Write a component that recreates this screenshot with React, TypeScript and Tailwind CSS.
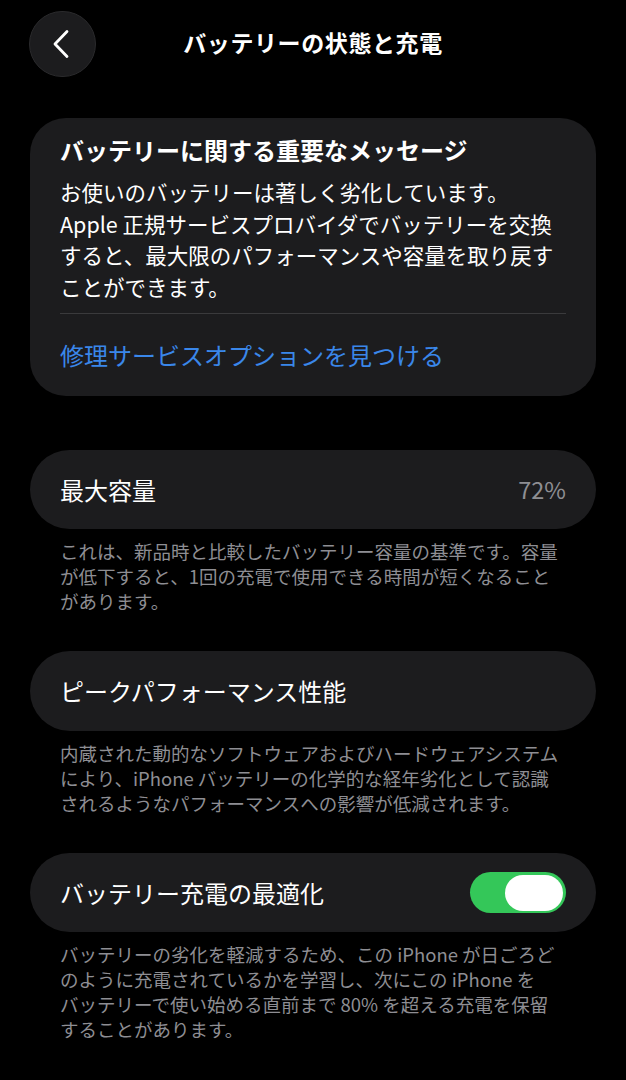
import React from "react";

const font = { fontFamily: '"Noto Sans CJK JP", "Noto Sans", sans-serif' };

function Footnote({ lines }: { lines: string[] }) {
  return (
    <div className="px-[30px] mt-[10px] text-[18.5px] leading-[25px] text-[#8e8e93] whitespace-nowrap">
      {lines.map((l) => (
        <div key={l}>{l}</div>
      ))}
    </div>
  );
}

function Toggle() {
  return (
    <div className="w-[96px] h-[41px] rounded-full bg-[#34c759] flex items-center justify-end pr-[3px]">
      <div className="w-[58px] h-[36px] rounded-full bg-white" />
    </div>
  );
}

export default function App() {
  return (
    <div className="min-h-screen bg-black text-white" style={font}>
      {/* Header */}
      <div className="relative h-[88px] flex items-center justify-center">
        <button className="absolute left-[29px] top-[11px] w-[67px] h-[66px] rounded-full bg-[#1c1c1e] border border-[#2a2a2c] flex items-center justify-center">
          <svg width="18" height="30" viewBox="0 0 18 30" fill="none" className="mr-[4px]">
            <path
              d="M15 2.5 L3 15 L15 27.5"
              stroke="white"
              strokeWidth="2.8"
              strokeLinecap="round"
              strokeLinejoin="round"
            />
          </svg>
        </button>
        <h1 className="mb-[4px] text-[23px] font-semibold tracking-[0.6px]">バッテリーの状態と充電</h1>
      </div>

      <div className="px-[30px] pt-[30px]">
        {/* Important message */}
        <div className="rounded-[36px] bg-[#1c1c1e] px-[30px] pt-[16px] pb-[25px]">
          <h2 className="text-[24px] leading-[32px] font-bold whitespace-nowrap">
            バッテリーに関する重要なメッセージ
          </h2>
          <div className="mt-[10px] text-[21.5px] leading-[31.5px] whitespace-nowrap">
            <div>お使いのバッテリーは著しく劣化しています。</div>
            <div>Apple 正規サービスプロバイダでバッテリーを交換</div>
            <div>すると、最大限のパフォーマンスや容量を取り戻す</div>
            <div>ことができます。</div>
          </div>
          <div className="mt-[11px] h-px bg-[#3a3a3c]" />
          <a className="block mt-[25px] text-[24px] leading-[32px] text-[#3a87ea]">
            修理サービスオプションを見つける
          </a>
        </div>

        {/* Max capacity */}
        <div className="mt-[54px] h-[79px] rounded-full bg-[#1c1c1e] px-[30px] flex items-center justify-between">
          <span className="text-[24px]">最大容量</span>
          <span className="text-[23.5px] text-[#8e8e93]">72%</span>
        </div>

        <Footnote
          lines={[
            "これは、新品時と比較したバッテリー容量の基準です。容量",
            "が低下すると、1回の充電で使用できる時間が短くなること",
            "があります。",
          ]}
        />

        <div className="mt-[37px] h-[80px] rounded-full bg-[#1c1c1e] px-[30px] flex items-center">
          <span className="text-[24px]">ピークパフォーマンス性能</span>
        </div>
        <Footnote
          lines={[
            "内蔵された動的なソフトウェアおよびハードウェアシステム",
            "により、iPhone バッテリーの化学的な経年劣化として認識",
            "されるようなパフォーマンスへの影響が低減されます。",
          ]}
        />

        <div className="mt-[37px] h-[79px] rounded-full bg-[#1c1c1e] px-[30px] flex items-center justify-between">
          <span className="text-[24px]">バッテリー充電の最適化</span>
          <Toggle />
        </div>
        <Footnote
          lines={[
            "バッテリーの劣化を軽減するため、この iPhone が日ごろど",
            "のように充電されているかを学習し、次にこの iPhone を",
            "バッテリーで使い始める直前まで 80% を超える充電を保留",
            "することがあります。",
          ]}
        />
      </div>
    </div>
  );
}
